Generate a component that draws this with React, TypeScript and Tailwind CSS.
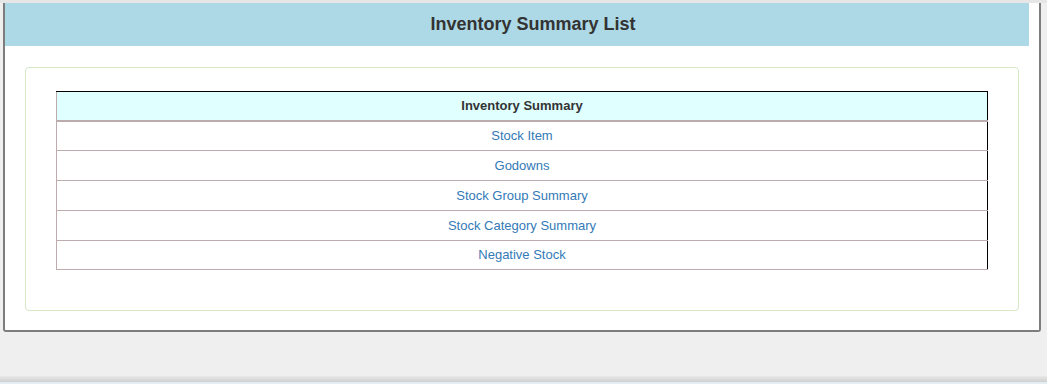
const links = [
  { label: "Stock Item", h: "h-[30px]" },
  { label: "Godowns", h: "h-[30px]" },
  { label: "Stock Group Summary", h: "h-[30px]" },
  { label: "Stock Category Summary", h: "h-[30px]" },
  { label: "Negative Stock", h: "h-[29px]" },
];

const App = () => {
  return (
    <div className="w-[1047px] h-[384px] bg-[#efefef] overflow-hidden flex flex-col font-['Liberation_Sans',Arial,sans-serif]">
      <div className="h-[3px] bg-[#e6e6e6] shrink-0" />
      <div className="ml-[3px] w-[1038px] h-[329px] bg-white border-l-2 border-r-2 border-b-2 border-[#7d7d7d] rounded-b-[3px] flex flex-col">
        <div className="w-[1024px] h-[43px] bg-[#add8e6] flex items-center justify-center pl-[32px]">
          <h1 className="text-[18px] font-bold text-[#333333]">Inventory Summary List</h1>
        </div>

        <div className="px-[20px] pt-[21px]">
          <div className="h-[244px] border border-[#d6e9c6] rounded-[4px] pt-[23px] px-[30px]">
            <table className="w-full border-collapse text-[13px]">
              <thead>
                <tr>
                  <th className="h-[29px] p-0 bg-[#e0ffff] border-t border-t-black border-r border-r-black border-l border-l-[#bcacae] border-b-2 border-b-[#bcacae] font-bold text-[#333333] text-center">
                    Inventory Summary
                  </th>
                </tr>
              </thead>
              <tbody>
                {links.map((row) => (
                  <tr key={row.label}>
                    <td className={`${row.h} p-0 border-l border-l-[#bcacae] border-r border-r-black border-b border-b-[#bcacae] text-center`}>
                      <a href="#" className="text-[#337ab7]">
                        {row.label}
                      </a>
                    </td>
                  </tr>
                ))}
              </tbody>
            </table>
          </div>
        </div>
      </div>
      <div className="flex-1" />
      <div className="h-[6px] bg-gradient-to-b from-[#e8e8e8] to-[#cfcfcf]" />
      <div className="h-[2px] bg-[#e4eef2]" />
    </div>
  );
};

export default App;
